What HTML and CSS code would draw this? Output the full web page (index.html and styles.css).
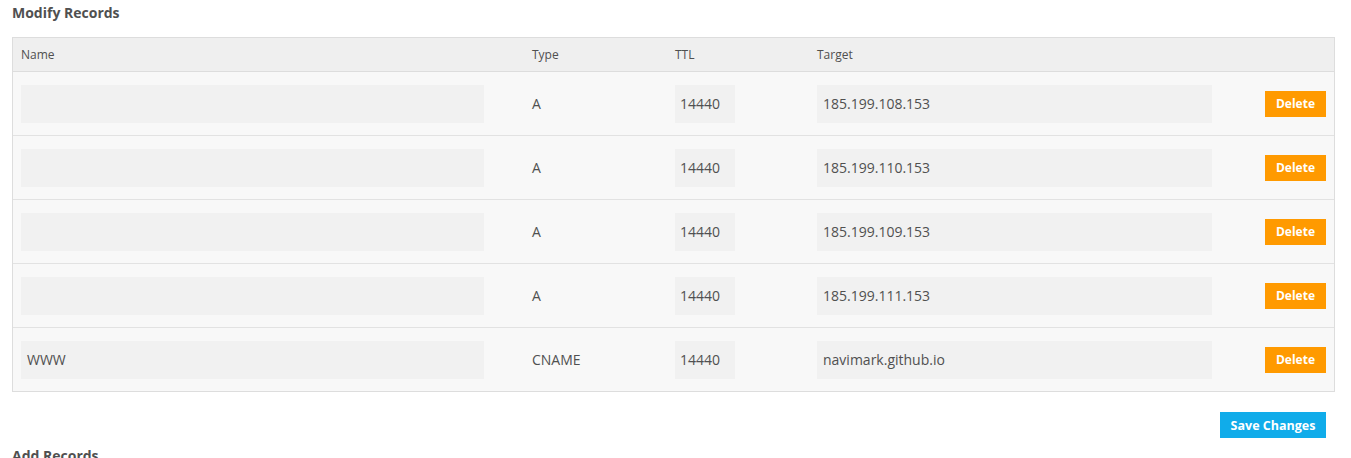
FILE: index.html
```html
<!DOCTYPE html>
<html>
<head>
<meta charset="utf-8">
<link rel="stylesheet" href="styles.css">
</head>
<body>
<div class="page">
  <h2 class="section-title">Modify Records</h2>
  <div class="records">
    <div class="row head">
      <div class="cell">Name</div>
      <div class="cell">Type</div>
      <div class="cell">TTL</div>
      <div class="cell">Target</div>
      <div class="cell"></div>
    </div>
    <div class="row">
      <div class="cell"><div class="field name"></div></div>
      <div class="cell type">A</div>
      <div class="cell"><div class="field ttl">14440</div></div>
      <div class="cell"><div class="field target">185.199.108.153</div></div>
      <div class="cell act"><button class="btn del">Delete</button></div>
    </div>
    <div class="row">
      <div class="cell"><div class="field name"></div></div>
      <div class="cell type">A</div>
      <div class="cell"><div class="field ttl">14440</div></div>
      <div class="cell"><div class="field target">185.199.110.153</div></div>
      <div class="cell act"><button class="btn del">Delete</button></div>
    </div>
    <div class="row">
      <div class="cell"><div class="field name"></div></div>
      <div class="cell type">A</div>
      <div class="cell"><div class="field ttl">14440</div></div>
      <div class="cell"><div class="field target">185.199.109.153</div></div>
      <div class="cell act"><button class="btn del">Delete</button></div>
    </div>
    <div class="row">
      <div class="cell"><div class="field name"></div></div>
      <div class="cell type">A</div>
      <div class="cell"><div class="field ttl">14440</div></div>
      <div class="cell"><div class="field target">185.199.111.153</div></div>
      <div class="cell act"><button class="btn del">Delete</button></div>
    </div>
    <div class="row last">
      <div class="cell"><div class="field name">WWW</div></div>
      <div class="cell type">CNAME</div>
      <div class="cell"><div class="field ttl">14440</div></div>
      <div class="cell"><div class="field target">navimark.github.io</div></div>
      <div class="cell act"><button class="btn del">Delete</button></div>
    </div>
  </div>
  <div class="actions">
    <button class="btn save">Save Changes</button>
  </div>
  <h2 class="section-title add">Add Records</h2>
</div>
</body>
</html>
```
FILE: styles.css
```css
* { box-sizing: border-box; }
html, body { margin: 0; padding: 0; background: #fff; }
body {
  font-family: "Open Sans", "Liberation Sans", sans-serif;
  color: #505050;
  overflow: hidden;
}
.page {
  width: 1347px;
  padding: 3px 12px 0 12px;
}
.section-title {
  margin: 0;
  font-size: 14px;
  font-weight: 700;
  line-height: 20px;
  color: #505050;
}
.records {
  margin-top: 14px;
  border: 1px solid #ddd;
  width: 1323px;
}
.row {
  display: grid;
  grid-template-columns: 511px 143px 142px 448px 1fr;
  height: 64px;
  align-items: center;
  background: #f8f8f8;
  border-bottom: 1px solid #e2e2e2;
}
.row.last { border-bottom: none; height: 63px; }
.row.head {
  height: 34px;
  background: #efefef;
  border-bottom: 1px solid #ddd;
}
.cell {
  padding: 0 8px;
  font-size: 14px;
}
.row.head .cell { font-size: 12px; }
.field {
  height: 38px;
  background: #f1f1f1;
  line-height: 38px;
  padding: 0 6px;
  font-size: 14px;
  color: #505050;
}
.field.name { width: 463px; }
.field.ttl { width: 60px; padding: 0 5px; }
.field.target { width: 395px; }
.act { display: flex; justify-content: flex-end; }
.btn {
  font-family: "Open Sans", "Liberation Sans", sans-serif;
  font-weight: 700;
  font-size: 12px;
  color: #fff;
  border: none;
  height: 26px;
  padding: 0;
  cursor: pointer;
}
.del { background: #ff9a00; width: 61px; }
.actions {
  display: flex;
  justify-content: flex-end;
  width: 1323px;
  padding-right: 9px;
  margin-top: 20px;
}
.save { background: #10acea; width: 106px; font-size: 12.5px; }
.add { margin-top: 8px; }
```
